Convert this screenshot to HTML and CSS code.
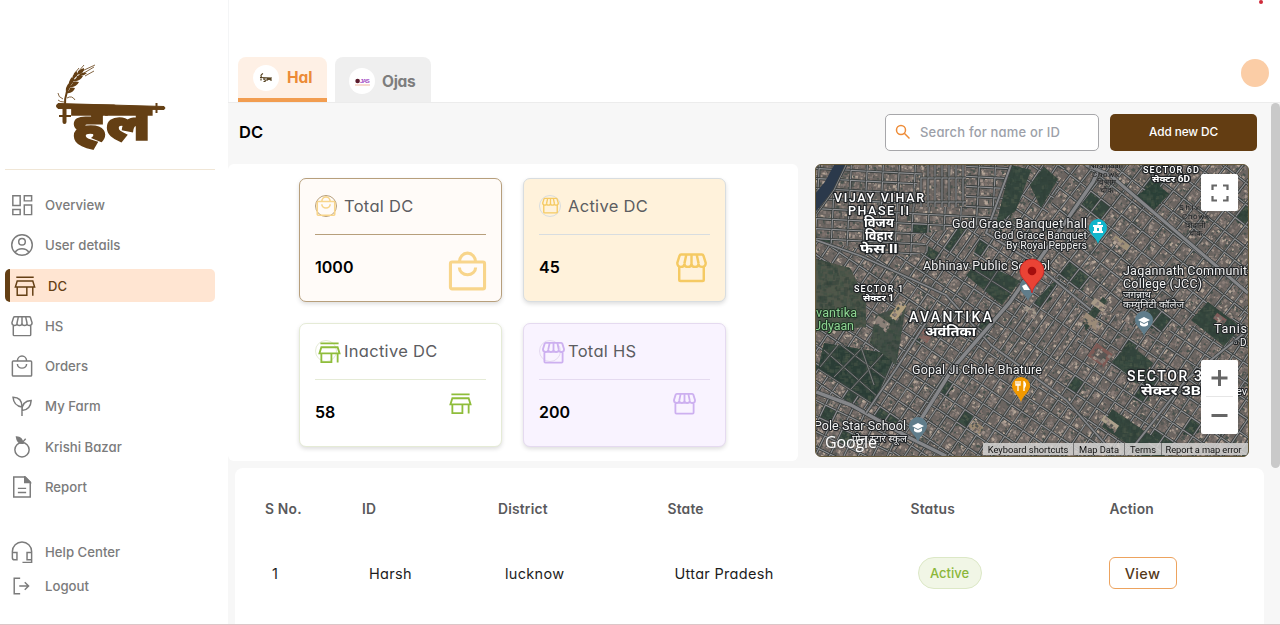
FILE: index.html
```html
<!DOCTYPE html>
<html lang="en">
<head>
<meta charset="utf-8">
<title>Hal – DC</title>
<link rel="stylesheet" href="styles.css">
</head>
<body>
<svg class="sprite" width="0" height="0" aria-hidden="true">
  <symbol id="i-grid" viewBox="0 0 24 24"><path d="M2 2h8v10.500H2zM14.500 2h8v5.500h-8zM14.500 12h8v10.500h-8zM2 17h8v5.500H2z"/></symbol>
  <symbol id="i-user" viewBox="0 0 24 24"><circle cx="12" cy="12" r="11.200"/><circle cx="12" cy="8.500" r="3.600"/><path d="M4.300 20c2-3 4.700-4 7.700-4s5.700 1 7.700 4"/></symbol>
  <symbol id="i-store" viewBox="0 0 24 24"><path d="M2.500 2.500h19M3.500 6.500h17L22.500 13h-21zM3.500 13v9H14v-9M20.500 13v9.500"/></symbol>
  <symbol id="i-shop" viewBox="0 0 24 24"><path d="M2.500 11v10.500q0 1 1 1h17q1 0 1-1V11M4 2h16q1 0 1.300 1L23 8.500q0 3-2.800 3T17.500 9q0 2.500-2.750 2.500T12 9q0 2.500-2.750 2.500T6.500 9q0 2.500-2.700 2.500T1 8.500L2.700 3q.3-1 1.300-1zM8 2L6.500 9M12 2v7M16 2l1.500 7"/></symbol>
  <symbol id="i-bag" viewBox="0 0 24 24"><rect x="1.500" y="6.500" width="21" height="16.500" rx="1"/><path d="M7 6.500a5 5.500 0 0 1 10 0M7 9.800a5 4.500 0 0 0 10 0"/></symbol>
  <symbol id="i-sprout" viewBox="0 0 24 24"><path d="M12 23V12.500M12 13Q3 12 2.200 2.500 12 2.500 12 13zM12 17Q12 6.500 22 6q-.5 10-10 11z"/></symbol>
  <symbol id="i-fruit" viewBox="0 0 24 24"><circle cx="12" cy="15" r="7.800"/><path d="M12 7.500L16 3"/><path class="solid" d="M6 1q6 0 7 7-6 .5-7-7z"/></symbol>
  <symbol id="i-doc" viewBox="0 0 24 24"><path d="M3 1h12.500L21 6.500V23H3zM7.500 13.500h9M7.500 18h9"/><path class="solid" d="M15 1v6h6z"/></symbol>
  <symbol id="i-head" viewBox="0 0 24 24"><path d="M1.500 15v-3.500a10.500 10.500 0 0 1 21 0V23.500H12.500M1.500 12.500h5v8H4q-2.500 0-2.500-2zM22.500 12.500h-5v8h5z"/></symbol>
  <symbol id="i-out" viewBox="0 0 24 24"><path d="M10 3.500H3.500v17H10M9 12h10M15 7.800l4.200 4.200-4.200 4.200"/></symbol>
</svg>
<div class="app">
  <aside class="side">
    <div class="brand">
      <svg width="112" height="90" viewBox="0 0 112 90">
        <path class="bar" d="M4 42L60 42.500M10.500 43V58"/>
        <path class="beam" d="M4 39.500L110 42.500q2 1.500 0 3L4 44.500q-2-2.500 0-5z"/>
        <path class="thin" d="M5 52h12M102.500 39v10M11 42Q10 28 20 15"/>
        <g class="grain">
          <path d="M12 29q-1-6 3-10 3 6-3 10zM12 29q7 1 9-5-7-2-9 5zM15 23q-1-6 3-10 3 6-3 10zM15 23q7 1 10-5-7-2-10 5zM18.500 17q-1-6 4-10 3 6-4 10zM19 17q7 1 10-5-7-2-10 5zM23 11q0-5 7-7 1 5-7 7zM24 12q5 1 9-3-5-2-9 3z"/>
        </g>
        <path class="hair" d="M28 7L41 1M30 9l10-6M31 12l9-5M24 8l6-7M20 10l5-6M9 35Q4 33 4 29M10 38Q6 38 4 36M13 34q5-3 8 2"/>
        <text class="logo-text" x="18" y="76" textLength="79" lengthAdjust="spacingAndGlyphs">हल</text>
      </svg>
    </div>
    <nav class="nav">
      <a><svg><use href="#i-grid"/></svg>Overview</a>
      <a><svg><use href="#i-user"/></svg>User details</a>
      <a class="on"><svg><use href="#i-store"/></svg>DC</a>
      <a><svg><use href="#i-shop"/></svg>HS</a>
      <a><svg><use href="#i-bag"/></svg>Orders</a>
      <a><svg><use href="#i-sprout"/></svg>My Farm</a>
      <a><svg><use href="#i-fruit"/></svg>Krishi Bazar</a>
      <a><svg><use href="#i-doc"/></svg>Report</a>
    </nav>
    <nav class="nav foot">
      <a><svg><use href="#i-head"/></svg>Help Center</a>
      <a><svg><use href="#i-out"/></svg>Logout</a>
    </nav>
  </aside>

  <div class="main">
    <header class="top">
      <span class="dot"></span>
      <div class="tabs">
        <div class="tab hal"><span class="chip"><svg width="14" height="10" viewBox="0 0 14 10"><path class="mini" d="M1 4.500L13 5M2.500 4Q1 2 4 .5M2 5.500v2M7 5Q4 5 5 6.500q2 0 1 2H4.500M8 8V6.500q1-1 2 0 1-1 2 0V8"/></svg></span>Hal</div>
        <div class="tab ojas"><span class="chip"><svg width="15" height="10" viewBox="0 0 15 10"><circle cx="2.600" cy="5" r="2.300" fill="#5a1a2c"/><text x="5" y="7" class="ojas-t" textLength="9.500">JAS</text><path d="M0 9h15" stroke="#efb6a0"/></svg></span>Ojas</div>
      </div>
      <span class="avatar"></span>
    </header>

    <section class="body">
      <div class="headline">
        <h1>DC</h1>
        <div class="search"><svg width="16" height="16" viewBox="0 0 16 16"><circle cx="6" cy="6" r="4.500"/><path d="M9.300 9.300L14.500 14.500"/></svg><span>Search for name or ID</span></div>
        <button class="add">Add new DC</button>
      </div>

      <div class="row">
        <div class="stats">
          <article class="card c1"><h2><i><svg><use href="#i-bag"/></svg></i>Total DC</h2><p><b>1000</b><svg class="big"><use href="#i-bag"/></svg></p></article>
          <article class="card c2"><h2><i><svg><use href="#i-shop"/></svg></i>Active DC</h2><p><b>45</b><svg class="big"><use href="#i-shop"/></svg></p></article>
          <article class="card c3"><h2><i><svg><use href="#i-store"/></svg></i>Inactive DC</h2><p><b>58</b><svg class="big"><use href="#i-store"/></svg></p></article>
          <article class="card c4"><h2><i><svg><use href="#i-shop"/></svg></i>Total HS</h2><p><b>200</b><svg class="big"><use href="#i-shop"/></svg></p></article>
        </div>

        <div class="map">
          <canvas id="land" width="432" height="291"></canvas>
          <svg class="labels" width="432" height="291" viewBox="0 0 432 291">
            <g class="dim">
              <text x="273" y="3" font-size="8" textLength="34">Niramaan</text><text x="276" y="12" font-size="8" textLength="27">Chowk</text><text x="281" y="20" font-size="8">विश्राम</text><text x="284" y="28" font-size="8">चौक</text>
              <text x="363" y="45" font-size="8" textLength="38">Shivaan</text><text x="366" y="54" font-size="8" textLength="27">Chowk</text><text x="369" y="63" font-size="8">शिवानी</text><text x="373" y="71" font-size="8">चौक</text>
            </g>
            <g class="area">
              <text x="18" y="37" font-size="12.500" textLength="90">VIJAY VIHAR</text>
              <text x="32" y="50" font-size="12.500" textLength="61">PHASE II</text>
              <text class="hi" x="48" y="62" font-size="12" textLength="30" lengthAdjust="spacingAndGlyphs">विजय</text>
              <text class="hi" x="49" y="75" font-size="12" textLength="28" lengthAdjust="spacingAndGlyphs">विहार</text>
              <text class="hi" x="44" y="88" font-size="12" textLength="38" lengthAdjust="spacingAndGlyphs">फेस II</text>
              <text x="38" y="127" font-size="9" textLength="49">SECTOR 1</text>
              <text class="hi" x="47" y="136" font-size="8.500" textLength="31" lengthAdjust="spacingAndGlyphs">सेक्टर 1</text>
              <text x="93" y="157" font-size="14" textLength="83">AVANTIKA</text>
              <text class="hi" x="109" y="171" font-size="13" textLength="51" lengthAdjust="spacingAndGlyphs">अवंतिका</text>
              <text x="327" y="8" font-size="9" textLength="56">SECTOR 6D</text>
              <text class="hi" x="336" y="17" font-size="8.500" textLength="38" lengthAdjust="spacingAndGlyphs">सेक्टर 6D</text>
              <text x="311" y="216" font-size="14" textLength="75">SECTOR 3</text>
              <text class="hi" x="325" y="230" font-size="13" textLength="60" lengthAdjust="spacingAndGlyphs">सेक्टर 3B</text>
            </g>
            <g class="poi">
              <text x="136" y="63" font-size="12.500" textLength="135">God Grace Banquet hall</text>
              <text x="178" y="74" font-size="10.500" textLength="93">God Grace Banquet</text>
              <text x="190" y="84" font-size="10.500" textLength="81">By Royal Peppers</text>
              <text x="107" y="105" font-size="12.500" textLength="127">Abhinav Public School</text>
              <text x="96" y="209" font-size="12.500" textLength="130">Gopal Ji Chole Bhature</text>
              <text x="-2" y="265" font-size="12.500" textLength="92">Pole Star School</text>
              <text x="36" y="277" font-size="9.500" textLength="55" lengthAdjust="spacingAndGlyphs">पोल स्टार स्कूल</text>
              <text x="307" y="110" font-size="12.500" textLength="124">Jagannath Communit</text>
              <text x="307" y="123" font-size="12.500" textLength="79">College (JCC)</text>
              <text x="307" y="133" font-size="9.500" textLength="28" lengthAdjust="spacingAndGlyphs">जगन्नाथ</text>
              <text x="307" y="143" font-size="9.500" textLength="61" lengthAdjust="spacingAndGlyphs">कम्युनिटी कॉलेज</text>
              <text x="398" y="168" font-size="12.500" textLength="33">Tanis</text>
              <text x="418" y="181" font-size="10">▫ D</text>
              <text x="420" y="230" font-size="11">ev</text>
            </g>
            <g class="park"><text x="0" y="152" font-size="12.500" textLength="41">vantika</text><text x="-3" y="165" font-size="12.500" textLength="41">Udyaan</text></g>
            <g class="pin" transform="translate(212 126)"><path fill="#607d8b" d="M0 10C-2 4-8 2-8-5a8 8 0 0 1 16 0C8 2 2 4 0 10z"/><path fill="#fff" d="M-6-5l4-2 4 6-6 0z"/></g>
            <g class="pin" transform="translate(282 67)"><path fill="#12b5cb" d="M0 12C-2 5-9 2-9-4a9 9 0 0 1 18 0C9 2 2 5 0 12z"/><path fill="#fff" fill-rule="evenodd" d="M-5 1v-2h1v-4h-1v-2h4.500v-3H3v2H.5v1H5v2H4v4h1v2zM-1-1h2v-3h-2z"/></g>
            <g class="pin" transform="translate(205 225)"><path fill="#f29900" d="M0 12C-2 5-9 2-9-4a9 9 0 0 1 18 0C9 2 2 5 0 12z"/><path d="M-3-9V1M-5-9v4h4v-4M3-9V1M3-8q3 2 0 6" stroke="#fff" fill="none" stroke-width="1.300"/></g>
            <g class="pin" transform="translate(102 265)"><path fill="#607d8b" d="M0 12C-2 5-9 2-9-4a9 9 0 0 1 18 0C9 2 2 5 0 12z"/><path fill="#fff" d="M-6-4L0-7 6-4 0-1zM-4-2v3q4 3 8 0v-3L0 0z"/></g>
            <g class="pin" transform="translate(328 159)"><path fill="#607d8b" d="M0 12C-2 5-9 2-9-4a9 9 0 0 1 18 0C9 2 2 5 0 12z"/><path fill="#fff" d="M-6-4L0-7 6-4 0-1zM-4-2v3q4 3 8 0v-3L0 0z"/></g>
            <path d="M216 128C214 118 204 114 204 106a12 12 0 0 1 24 0C228 114 218 118 216 128z" fill="#ea4335" stroke="#c5221f" stroke-width=".8"/><circle cx="216" cy="106" r="4.300" fill="#a50e0e"/>
            <text x="9" y="283" class="google" textLength="52">Google</text>
          </svg>
          <div class="map-ui">
            <div class="ctl full"><svg width="18" height="18" viewBox="0 0 18 18"><path d="M1.500 6V1.500H6M12 1.500h4.500V6M16.500 12v4.500H12M6 16.500H1.500V12"/></svg></div>
            <div class="ctl zoom"><svg width="37" height="74" viewBox="0 0 37 74"><path d="M10.500 18h16M18.500 10v16M10.500 55.500h16" stroke-width="3"/><path d="M5 36.500h27" class="sep"/></svg></div>
          </div>
          <div class="legal"><span class="l1">Keyboard shortcuts</span><span class="l2">Map Data</span><span class="l3">Terms</span><span class="l4">Report a map error</span></div>
        </div>
      </div>

      <div class="table">
        <div class="tr th"><span>S No.</span><span>ID</span><span>District</span><span>State</span><span>Status</span><span>Action</span></div>
        <div class="tr td"><span>1</span><span>Harsh</span><span>lucknow</span><span>Uttar Pradesh</span><span><em class="pill">Active</em></span><span><button class="view">View</button></span></div>
      </div>
      <span class="scroll"></span>
    </section>
  </div>
</div>
<script src="map.js"></script>
</body>
</html>
```
FILE: styles.css
```css
* { box-sizing: border-box; }
body { margin: 0; font-family: Inter, "Open Sans", "Noto Sans", sans-serif; font-feature-settings: "cv11"; background: #fff; color: #000; }
h1, h2, p { margin: 0; }
button { font: inherit; font-feature-settings: inherit; letter-spacing: inherit; }
svg { fill: none; flex: none; }
.sprite { position: absolute; }
.solid { fill: currentColor; }
.app { display: flex; height: 625px; overflow: hidden; border-bottom: 1px solid #dcc6c8; }

/* sidebar */
.side { width: 228px; flex: none; padding: 0 13px 0 5px; }
.brand { height: 170px; padding: 64px 0 0 49px; border-bottom: 1px solid #f0e6d6; }
.bar { stroke: #643f14; stroke-width: 4; stroke-linecap: round; }
.beam { fill: #643f14; stroke: #643f14; stroke-width: 1; }
.thin { stroke: #643f14; stroke-width: 2; }
.grain { fill: #643f14; }
.hair { stroke: #643f14; stroke-width: .8; }
.logo-text { font: 900 51px "Noto Sans Devanagari", "Noto Sans", sans-serif; fill: #643f14; stroke: #643f14; stroke-width: 1.500; }
.nav { padding-top: 14.500px; display: grid; grid-auto-rows: 40.350px; font-size: 13.200px; font-weight: 500; color: #7b7b7b; }
.nav a { display: flex; align-items: center; gap: 12px; padding-left: 6px; }
.nav svg { width: 22px; height: 22px; stroke: currentColor; stroke-width: 1.600; }
.nav .on { height: 33px; margin-top: 4px; border-left: 5px solid #643f14; border-radius: 5px; background: #ffe5d2; color: #643f14; padding-left: 4px; font-size: 13px; }
.foot { padding-top: 28px; grid-auto-rows: 33.500px; }

/* header */
.main { flex: 1; min-width: 0; }
.top { position: relative; height: 102px; padding: 57px 11px 0 9px; display: flex; justify-content: space-between; border-left: 1px solid #f4f5f6; }
.dot { position: absolute; right: 17px; top: 0; width: 4px; height: 4px; border-radius: 50%; background: #cf2a3a; }
.tabs { display: flex; gap: 8px; }
.tab { display: flex; align-items: center; border-radius: 8px 8px 0 0; height: 45px; font-size: 15.500px; font-weight: 700; }
.hal { width: 89px; padding: 0 0 0 15px; gap: 8px; background: #fef0e5; color: #ec8b37; border-bottom: 4px solid #f29d50; }
.ojas { width: 96px; padding: 3px 0 0 14px; gap: 7px; background: #efefef; color: #7d7d7d; letter-spacing: -.3px; }
.chip { width: 26px; height: 26px; border-radius: 50%; background: #fff; display: grid; place-items: center; }
.mini { stroke: #54401f; stroke-width: 1.200; }
.ojas-t { font: 700 6px "Liberation Sans", sans-serif; fill: #a34bc4; }
.avatar { width: 28px; height: 28px; margin-top: 2px; border-radius: 50%; background: #fbcda6; }

/* content */
.body { position: relative; height: 523px; background: #f7f7f7; border-top: 1px solid #ececec; }
.headline { height: 61px; padding: 11px 23px 0 11px; display: flex; align-items: flex-start; }
h1 { flex: 1; font-size: 16.500px; line-height: 36px; font-weight: 600; }
.search { width: 214px; height: 37px; margin-right: 11px; border: 1px solid #a7a7aa; border-radius: 5px; background: #fff; display: flex; align-items: center; gap: 9px; padding: 0 0 1px 9px; font-size: 13px; font-weight: 500; color: #9c9fa8; letter-spacing: .18px; }
.search svg { stroke: #ee8c38; stroke-width: 1.500; }
.add { width: 147px; height: 37px; border: 0; border-radius: 5px; background: #633d12; color: #fff; font-size: 11.800px; font-weight: 500; letter-spacing: -.1px; padding: 0 0 2px; }
.row { display: flex; gap: 17px; align-items: flex-start; }
.stats { width: 570px; height: 297px; padding: 14px 0 0 71px; display: grid; grid-template-columns: 203px 203px; grid-auto-rows: 124px; gap: 21px; background: #fff; border-radius: 6px; }
.card { border: 1px solid #ddd; border-radius: 7px; padding: 0 15px; box-shadow: 0 2px 4px #0002; }
.card h2 { display: flex; align-items: center; gap: 7px; height: 56px; padding-bottom: 2px; border-bottom: 1px solid; border-color: inherit; font-size: 16.500px; font-weight: 400; letter-spacing: .3px; color: #5c5d61; }
.card i { width: 22px; height: 22px; border: 1px solid; border-color: inherit; border-radius: 50%; display: grid; place-items: center; }
.card svg { width: 20px; height: 20px; stroke: currentColor; stroke-width: 1.900; }
.card p { display: flex; justify-content: space-between; align-items: flex-start; height: 67px; }
.card b { font-size: 16px; font-weight: 600; line-height: 20px; margin-top: 22px; color: #000; }
.c1 { background: #fffbf8; border-color: #b79f7c; }
.c1 svg, .c2 svg { color: #f8d58b; }
.c1 .big { width: 39px; height: 40px; margin: 16px -1px 0 0; }
.c2 { background: #fff2db; border-color: #d8dde0; }
.c2 svg { color: #f5ca63; }
.c2 .big { width: 31px; height: 31px; margin: 17px 3px 0 0; }
.c2 i svg { width: 17px; height: 17px; }
.c3 { background: #fff; border-color: #e5ebd6; }
.c3 svg { color: #8fbd3b; }
.c4 { background: #f9f3ff; border-color: #e5daf0; }
.c4 svg { color: #cdb0f0; }
.c3 i svg, .c4 i svg { width: 23px; height: 23px; margin: 0 0 0 2px; }
.c3 .big, .c4 .big { width: 23px; height: 23px; margin: 12px 14px 0 0; }

/* map */
.map { position: relative; width: 434px; height: 293px; border: 1px solid #66593a; border-radius: 6px; overflow: hidden; background: #4b504d; }
.map canvas { display: block; }
.labels { position: absolute; left: 0; top: 0; font-family: Roboto, "Noto Sans Devanagari", "Noto Sans", sans-serif; font-feature-settings: normal; }
.labels text { paint-order: stroke; stroke-linejoin: round; }
.area text { fill: #fff; stroke: #202326; stroke-width: 2.500px; font-weight: 500; }
.area .hi { font-weight: 700; }
.poi text { fill: #f2f2f2; stroke: #202326; stroke-width: 2.200px; }
.park text { fill: #8ed492; stroke: #1d3323; stroke-width: 2px; }
.dim text { fill: #17191a; stroke: #85858577; stroke-width: 1px; }
.labels .google { font: 500 16px "Open Sans", sans-serif; fill: #fff; stroke: #5555; stroke-width: 1.500px; }
.map-ui { position: absolute; right: 10px; top: 9px; height: 260px; display: flex; flex-direction: column; justify-content: space-between; }
.ctl { width: 37px; background: #fff; border-radius: 2px; stroke: #666; }
.full { height: 37px; display: grid; place-items: center; stroke-width: 2.200; }
.zoom { height: 74px; }
.sep { stroke: #e6e6e6; }
.legal { position: absolute; right: 0; bottom: 1px; display: flex; height: 12px; font: 9.300px/13px Roboto, sans-serif; color: #111; }
.legal span { background: #d6d5d3d8; text-align: center; white-space: nowrap; border-left: 1px solid #777; }
.legal .l1 { width: 90px; border: 0; }
.legal .l2 { width: 51px; }
.legal .l3 { width: 37px; }
.legal .l4 { width: 87px; padding-right: 3px; letter-spacing: -.1px; }

/* table */
.table { margin: 7px 16px 0 7px; height: 170px; background: #fff; border-radius: 8px; }
.tr { display: grid; grid-template-columns: 97px 136px 169.500px 243px 199px 1fr; padding-left: 30px; align-items: center; }
.th { height: 81px; font-weight: 600; color: #59595b; font-size: 13.800px; letter-spacing: .2px; }
.td { height: 48px; padding-left: 37px; color: #1d1d1d; font-size: 14.500px; letter-spacing: .3px; }
.td span:last-child { margin-left: -8px; }
.pill { display: grid; place-items: center; width: 64px; height: 32px; border: 1px solid #dce8c6; border-radius: 16px; background: #f1f6e6; color: #8bb63a; font-style: normal; font-weight: 500; font-size: 13px; letter-spacing: 0; }
.view { width: 68px; height: 32px; padding: 0; border: 1.500px solid #eda35e; border-radius: 6px; background: #fff; color: #54391a; font-size: 14.500px; font-weight: 500; }
.scroll { position: absolute; right: 0; top: 0; width: 9px; height: 365px; border-radius: 5px; background: #c9c9c9; }
```
FILE: map.js
```js
const ctx = document.getElementById('land').getContext('2d');
let seed = 7;
const rnd = () => (seed = (seed * 16807) % 2147483647) / 2147483647;

function trace(points) {
  ctx.beginPath();
  points.forEach(([x, y], i) => (i ? ctx.lineTo(x, y) : ctx.moveTo(x, y)));
}

// Small mottled patches: rooftops or tree cover
function speckle(n, region, palette, size) {
  for (let i = 0; i < n; i++) {
    const [x, y, w, h] = region;
    ctx.fillStyle = palette[Math.floor(rnd() * palette.length)];
    ctx.fillRect(x + rnd() * w, y + rnd() * h, 1 + rnd() * size, 1 + rnd() * size);
  }
}

const roofs = ['#a1938a', '#8b7e78', '#766d69', '#565754', '#4a534e', '#b5a698', '#7f726d', '#6a625e', '#857b76'];
const trees = ['#34463e', '#2f4038', '#425246', '#3a4d42', '#4d594a'];

function district(poly, angle, gapX, gapY) {
  ctx.save();
  trace(poly);
  ctx.closePath();
  ctx.clip();
  ctx.translate(216, 145);
  ctx.rotate(angle * Math.PI / 180);
  ctx.fillStyle = '#6b6561';
  ctx.fillRect(-400, -400, 800, 800);
  speckle(65000, [-300, -300, 600, 600], roofs, 2.2);
  for (let y = -300; y < 300; y += gapY) {
    for (let x = -300; x < 300; x += gapX) {
      const w = gapX * (rnd() < .2 ? 2 : 1);
      if (rnd() < .05) {
        ctx.fillStyle = '#34453d';
        ctx.fillRect(x, y, w, gapY);
        speckle(40, [x, y, w, gapY], trees, 3);
      }
      ctx.strokeStyle = '#3a3f3e';
      ctx.lineWidth = 2.4;
      ctx.strokeRect(x, y, w, gapY);
      ctx.strokeStyle = '#909194';
      ctx.lineWidth = 1.1;
      ctx.strokeRect(x, y, w, gapY);
    }
  }
  ctx.restore();
}

function green(poly, base) {
  ctx.save();
  trace(poly);
  ctx.closePath();
  ctx.clip();
  ctx.fillStyle = base || '#33443c';
  ctx.fillRect(0, 0, 432, 291);
  ctx.globalAlpha = .5;
  speckle(16000, [0, 0, 432, 291], trees, 4);
  ctx.restore();
}

function road(points, width, color) {
  trace(points);
  ctx.lineJoin = 'round';
  ctx.strokeStyle = '#3c4141';
  ctx.lineWidth = width + 1.5;
  ctx.stroke();
  ctx.strokeStyle = color || '#858689';
  ctx.lineWidth = width;
  ctx.stroke();
}

district([[0, 0], [432, 0], [432, 291], [0, 291]], 34, 12, 15);
district([[0, 0], [200, 0], [175, 70], [90, 92], [0, 75]], 3, 16, 10);
district([[110, 0], [150, 0], [150, 42], [90, 42]], 0, 7, 24);
district([[95, 70], [170, 60], [150, 105]], -55, 30, 8);
district([[175, 180], [245, 110], [275, 160], [215, 230]], -55, 34, 9);
district([[250, 0], [432, 0], [432, 150], [330, 170], [215, 95]], 38, 13, 17);
district([[0, 225], [90, 265], [75, 291], [0, 291]], 26, 13, 14);

green([[0, 94], [34, 103], [50, 135], [50, 162], [0, 166]], '#50564a');
green([[8, 178], [80, 190], [58, 240], [2, 204]], '#2a3d36');
[[[8, 185], [62, 232]], [[25, 180], [70, 214]], [[4, 202], [22, 180]], [[18, 212], [48, 181]], [[35, 224], [68, 188]], [[2, 204], [58, 240], [80, 190]], [[45, 182], [58, 220]]].forEach(p => road(p, .8, '#8b8f8b'));
green([[150, 110], [163, 96], [204, 116], [186, 140]]);
road([[157, 104], [195, 128]], .8);
road([[168, 126], [182, 105]], .8);
green([[320, 31], [340, 18], [353, 29], [335, 48]], '#2a4037');
green([[296, 197], [313, 179], [337, 198], [320, 217]]);
green([[267, 155], [287, 132], [291, 136], [270, 166]]);
green([[375, 155], [392, 137], [425, 162], [408, 181]]);
green([[286, 262], [296, 244], [337, 272], [325, 288]]);
green([[195, 0], [215, 5], [200, 45], [180, 60]]);
green([[214, 20], [228, 2], [242, 14], [225, 43]]);
green([[60, 150], [90, 140], [80, 200], [54, 178]], '#464f48');

// Campus buildings and open yards
[['#a89a88', 283, 140, 15, 7], ['#9b8b78', 276, 157, 20, 9], ['#7e5a55', 284, 190, 20, 16], ['#595654', 284, 190, 12, 9],
 ['#b29f7e', 82, 146, 8, 18], ['#8b8078', 66, 158, 15, 8], ['#86645e', 108, 170, 14, 10], ['#9c8b73', 160, 262, 13, 8],
 ['#9f9178', 305, 78, 18, 6], ['#a59c8e', 214, 146, 13, 5], ['#805c5a', 404, 154, 12, 7], ['#ada18c', 294, 258, 18, 6]].forEach(([c, x, y, w, h]) => {
  ctx.save();
  ctx.translate(x, y);
  ctx.rotate(.62);
  ctx.fillStyle = c;
  ctx.fillRect(-w / 2, -h / 2, w, h);
  speckle(14, [-w / 2, -h / 2, w, h], roofs, 2.5);
  ctx.restore();
});

trace([[27, -4], [14, 20], [-4, 42]]);
ctx.strokeStyle = '#2b394b';
ctx.lineWidth = 12;
ctx.stroke();
road([[30, 0], [18, 25], [0, 50]], 1);
road([[0, 75], [45, 91], [130, 130], [175, 180], [250, 235], [300, 291]], 1.8);
road([[97, 267], [137, 203], [194, 137], [230, 85], [277, 17], [285, 0]], 3.5);
road([[270, 0], [294, 10], [384, 87], [432, 128]], 3);
road([[0, 227], [35, 240], [94, 273], [130, 291]], 3.5);
road([[50, 248], [80, 204], [118, 145]], 1.8);
road([[195, 0], [170, 68], [215, 96], [275, 145]], 2);
road([[432, 165], [370, 215], [310, 291]], 2);
```
